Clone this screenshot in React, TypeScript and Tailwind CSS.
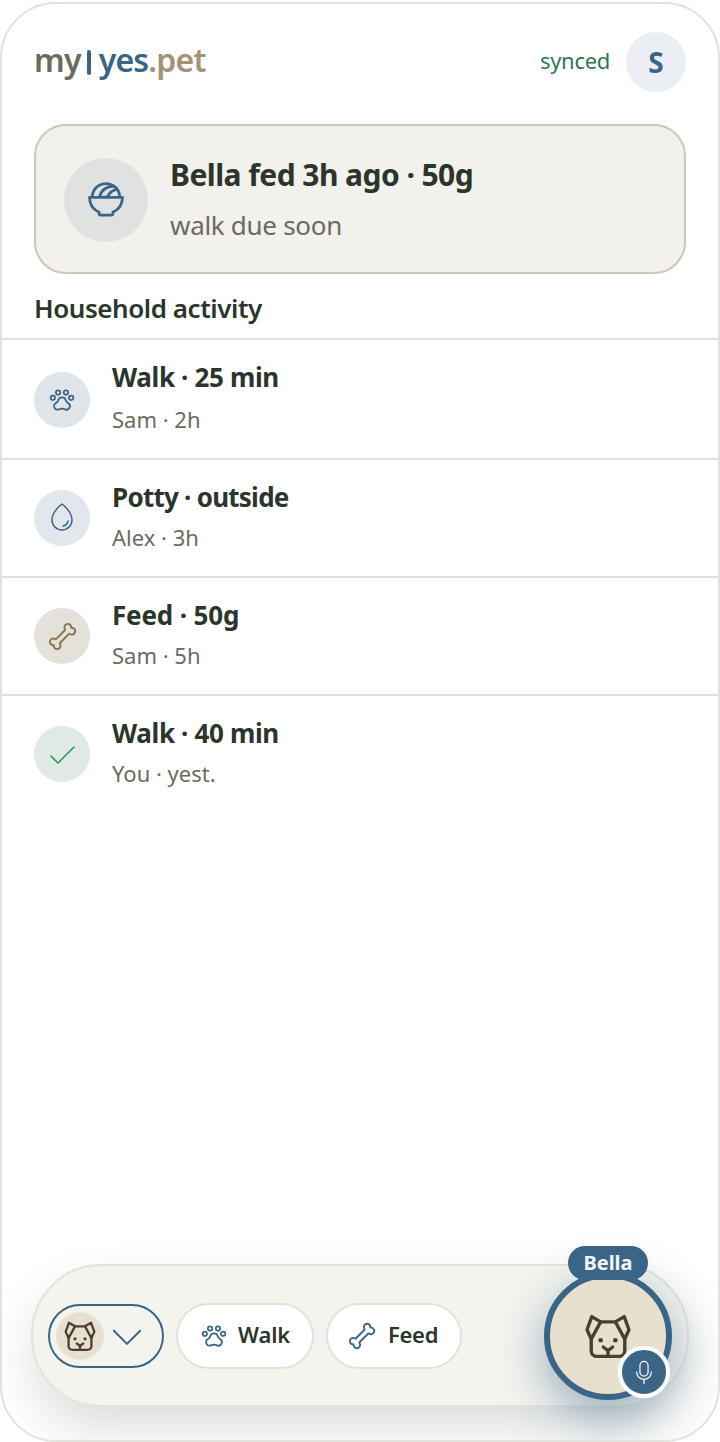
import React from 'react';
import {
  PiBone,
  PiBowlFood,
  PiCaretDownLight,
  PiCheckLight,
  PiDropLight,
  PiMicrophoneLight,
  PiPawPrint,
} from 'react-icons/pi';

const font = "font-['Noto_Sans',sans-serif]";

const DogFace = ({ className }: { className: string }) => (
  <svg viewBox="0 0 42 42" fill="none" stroke="currentColor" strokeWidth="3.2" strokeLinejoin="round" strokeLinecap="round" className={`overflow-visible ${className}`}>
    <path d="M14 7.5 H28 L36.5 2.5 L41 15 L37 24 L28 7.5" />
    <path d="M14 7.5 L5.5 2.5 L1 15 L5 24 Z" />
    <path d="M5 22 V35 a5.5 5.5 0 0 0 5.5 5.5 h21 a5.5 5.5 0 0 0 5.5 -5.5 V22" />
    <path d="M16.5 31.5 L21 35 L25.5 31.5 M21 35 V40" />
    <circle cx="14" cy="25" r="2.2" fill="currentColor" stroke="none" />
    <circle cx="28" cy="25" r="2.2" fill="currentColor" stroke="none" />
  </svg>
);

const activity = [
  { title: 'Walk · 25 min', sub: 'Sam · 2h', bg: 'bg-[#dfe5e8]', color: 'text-[#3a6587] text-[28px]', icon: <PiPawPrint />, h: 'h-[120px]', mt: 'mt-[32px]', gap: 'mt-[9px]', track: 'tracking-[-0.35px]' },
  { title: 'Potty · outside', sub: 'Alex · 3h', bg: 'bg-[#e2e7ed]', color: 'text-[#3a6587] text-[32px]', icon: <PiDropLight />, h: 'h-[118px]', mt: 'mt-[30px]', gap: 'mt-[7px]', track: 'tracking-[-0.75px]' },
  { title: 'Feed · 50g', sub: 'Sam · 5h', bg: 'bg-[#e4e1da]', color: 'text-[#8a7350] text-[31px]', icon: <PiBone />, h: 'h-[118px]', mt: 'mt-[30px]', gap: 'mt-[7px]', track: 'tracking-[-0.15px]' },
  { title: 'Walk · 40 min', sub: 'You · yest.', bg: 'bg-[#deeae3]', color: 'text-[#2c8f5f] text-[32px]', icon: <PiCheckLight />, h: 'h-[118px]', mt: 'mt-[30px]', gap: 'mt-[7px]', track: 'tracking-[-0.35px]' },
];

const App = () => {
  return (
    <div className={`${font} w-[720px] h-[1442px] pt-[2px] bg-white`}>
      <div className="relative w-full h-[1440px] overflow-hidden rounded-[56px] border-2 border-[#e2e2dc] bg-white">
        <div className="flex h-[88px] items-center justify-between px-[32px] pt-[28px]">
          <div className="flex items-center text-[32px] font-semibold leading-[60px] tracking-[-0.8px]">
            <span className="mb-[4px] text-[#6b6b5e]">my</span>
            <span className="ml-[6px] mr-[8px] h-[25px] w-[4px] rounded-sm bg-[#3a6587]" />
            <span className="mb-[4px] text-[#3a6587]">yes</span>
            <span className="mb-[4px] text-[#a39273]">.pet</span>
          </div>
          <div className="flex items-center gap-[16px]">
            <span className="mb-[4px] text-[22px] tracking-[-0.3px] text-[#2c7a4f]">synced</span>
            <div className="flex h-[60px] w-[60px] items-center justify-center rounded-full bg-[#ebeef3] text-[28px] font-bold text-[#3a6587]">
              S
            </div>
          </div>
        </div>

        <div className="mx-[32px] mt-[32px] flex h-[150px] items-center gap-[22px] rounded-[32px] border-2 border-[#cfc7b8] bg-[#f2f1ed] pl-[28px]">
          <div className="mt-[2px] flex h-[84px] w-[84px] shrink-0 items-center justify-center rounded-full bg-[#e0e2e2] text-[44px] text-[#3a6587]">
            <PiBowlFood />
          </div>
          <div>
            <div className="text-[30px] font-bold leading-[40px] tracking-[-0.55px] text-[#2c352b]">Bella fed 3h ago · 50g</div>
            <div className="mt-[12px] text-[26px] leading-[36px] tracking-[-0.3px] text-[#6b6b5e]">walk due soon</div>
          </div>
        </div>

        <div className="ml-[32px] mt-[17px] h-[47px] text-[26px] font-semibold leading-[34px] tracking-[-0.45px] text-[#2c352b]">Household activity</div>

        <div>
          {activity.map((row) => (
            <div key={row.title} className={`flex gap-[22px] border-t-2 border-[#e2e2dc] pl-[32px] ${row.h}`}>
              <div className={`flex h-[56px] w-[56px] shrink-0 items-center justify-center rounded-full ${row.mt} ${row.bg} ${row.color}`}>
                {row.icon}
              </div>
              <div className="pt-[19px]">
                <div className={`text-[26px] font-bold leading-[36px] text-[#2c352b] ${row.track}`}>{row.title}</div>
                <div className={`${row.gap} text-[22px] leading-[30px] text-[#6b6b5e]`}>{row.sub}</div>
              </div>
            </div>
          ))}
        </div>

        <div className="absolute bottom-[33px] left-[29px] flex h-[143px] w-[658px] items-center gap-[12px] rounded-[70px] border-2 border-[#e4e4dc] bg-[#f4f4ef] pl-[15px] shadow-[0_24px_48px_rgba(44,53,43,0.16)]">
          <div className="flex h-[64px] w-[116px] items-center gap-[2px] rounded-full border-2 border-[#3a6587] pl-[6px]">
            <div className="flex h-[48px] w-[48px] shrink-0 items-center justify-center rounded-full bg-[#e8e0cf] text-[#4a3f2c]">
              <DogFace className="h-[30px] w-[30px]" />
            </div>
            <PiCaretDownLight className="text-[42px] text-[#3a6587]" />
          </div>
          <div className="flex h-[66px] w-[138px] items-center gap-[10px] rounded-full border-2 border-[#e2e2dc] bg-white pl-[22px] text-[22px] font-semibold tracking-[-0.1px] text-[#2c352b]">
            <PiPawPrint className="text-[28px] text-[#3a6587]" />
            <span className="mb-[2px]">Walk</span>
          </div>
          <div className="flex h-[66px] w-[136px] items-center gap-[11px] rounded-full border-2 border-[#e2e2dc] bg-white pl-[19px] text-[22px] font-semibold tracking-[-0.3px] text-[#2c352b]">
            <PiBone className="text-[30px] text-[#3a6587]" />
            <span className="mb-[2px]">Feed</span>
          </div>

          <div className="absolute left-[511px] top-[6px] flex h-[128px] w-[128px] items-center justify-center rounded-full border-[6px] border-[#3a6587] bg-[#e8e0cf] text-[#4a3f2c] shadow-[0_16px_48px_rgba(58,101,135,0.5)]">
            <DogFace className="h-[44px] w-[44px]" />
          </div>
          <div className="absolute left-[535px] top-[-20px] flex h-[34px] w-[80px] items-center justify-center rounded-full bg-[#3a6587] text-[20px] font-bold text-[#f2f5f8]">
            Bella
          </div>
          <div className="absolute left-[585px] top-[80px] flex h-[52px] w-[52px] items-center justify-center rounded-full border-4 border-white bg-[#3a6587] text-[26px] text-white">
            <PiMicrophoneLight />
          </div>
        </div>
      </div>
    </div>
  );
};

export default App;
